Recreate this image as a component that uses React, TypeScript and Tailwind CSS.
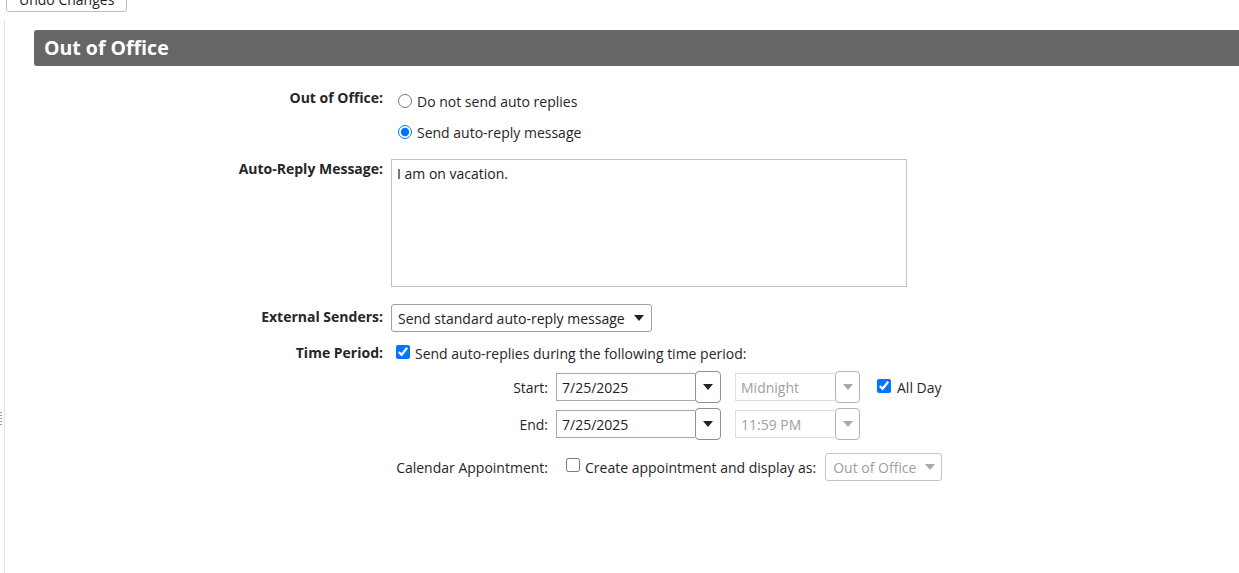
import React from 'react';

function Caret({ muted = false }: { muted?: boolean }) {
    return (
        <svg width="10" height="6" viewBox="0 0 10 6" className="block">
            <polygon points="0,0 10,0 5,6" fill={muted ? '#a8a8a8' : '#222'} />
        </svg>
    );
}

function DateField({ value }: { value: string }) {
    return (
        <div className="flex items-center">
            <div className="h-[28px] w-[139px] border border-[#a9a9a9] border-r-0 flex items-center pl-[5px] text-[#222]">
                {value}
            </div>
            <button className="h-[32px] w-[26px] border border-[#8f8f8f] rounded-[4px] bg-white flex items-center justify-center">
                <Caret />
            </button>
        </div>
    );
}

function TimeField({ value }: { value: string }) {
    return (
        <div className="flex items-center ml-[14px]">
            <div className="h-[28px] w-[100px] border border-[#dcdcdc] border-r-0 flex items-center pl-[5px] text-[#a0a0a0]">
                {value}
            </div>
            <button disabled className="h-[32px] w-[25px] border border-[#b5b5b5] rounded-[4px] bg-white flex items-center justify-center">
                <Caret muted />
            </button>
        </div>
    );
}

export default function App() {
    return (
        <div className="w-[1239px] h-[573px] overflow-hidden bg-white text-[14px] text-[#262626] font-['Open_Sans',sans-serif] relative">
            {/* top toolbar, mostly scrolled away */}
            <div className="pl-[6px] -mt-[14px] h-[26px]">
                <button className="h-[26px] px-[12px] border border-[#bdbdbd] rounded-[3px] bg-white text-[14px] text-[#222]">
                    Undo Changes
                </button>
            </div>

            {/* splitter grip */}
            <div className="absolute left-0 top-[412px] flex flex-col gap-[2px]">
                {[0, 1, 2, 3, 4].map((i) => (
                    <span key={i} className="block w-[2px] h-[1px] bg-[#9a9a9a]" />
                ))}
            </div>

            <div className="ml-[4px] mt-[8px] h-[600px] border-l border-[#e3e3e3] pl-[29px] pt-[10px]">
                <div className="h-[36px] w-[1300px] bg-[#666666] rounded-l-[3px] flex items-center pl-[10px] text-white font-bold text-[19.5px]">
                    Out of Office
                </div>

                {/* Out of Office */}
                <div className="flex mt-[24px]">
                    <div className="w-[349px] text-right font-bold leading-[16px]">Out of Office:</div>
                    <div className="ml-[8px] flex flex-col gap-[9px]">
                        <label className="flex items-center h-[22px]">
                            <input type="radio" name="ooo" className="m-0 ml-[7px] w-[14px] h-[14px] accent-[#0075ff]" />
                            <span className="ml-[5px]">Do not send auto replies</span>
                        </label>
                        <label className="flex items-center h-[22px]">
                            <input type="radio" name="ooo" defaultChecked className="m-0 ml-[7px] w-[14px] h-[14px] accent-[#0075ff]" />
                            <span className="ml-[5px]">Send auto-reply message</span>
                        </label>
                    </div>
                </div>

                {/* Auto-Reply Message */}
                <div className="flex mt-[16px]">
                    <div className="w-[349px] text-right font-bold leading-[20px]">Auto-Reply Message:</div>
                    <textarea
                        defaultValue="I am on vacation."
                        className="ml-[8px] w-[516px] h-[128px] border border-[#c2c2c2] px-[5px] pt-[4px] leading-[20px] resize-none outline-none text-[#222]"
                    />
                </div>

                {/* External Senders */}
                <div className="flex items-center h-[28px] mt-[17px]">
                    <div className="w-[349px] text-right font-bold leading-[20px] -mt-[3px]">External Senders:</div>
                    <div className="ml-[8px] h-[28px] w-[261px] border border-[#a0a0a0] rounded-[3px] flex items-center justify-between pl-[6px] pr-[7px] text-[#222]">
                        <span>Send standard auto-reply message</span>
                        <Caret />
                    </div>
                </div>

                {/* Time Period */}
                <div className="flex mt-[10px]">
                    <div className="w-[349px] text-right font-bold leading-[22px]">Time Period:</div>
                    <label className="ml-[8px] flex items-center h-[22px]">
                        <input type="checkbox" defaultChecked className="m-0 ml-[5px] -mt-[3px] w-[14px] h-[14px] accent-[#0075ff]" />
                        <span className="ml-[5px]">Send auto-replies during the following time period:</span>
                    </label>
                </div>

                <div className="ml-[357px]">
                    {/* Start */}
                    <div className="flex items-center h-[32px] mt-[7px]">
                        <div className="w-[157px] text-right mr-[8px]">Start:</div>
                        <DateField value="7/25/2025" />
                        <TimeField value="Midnight" />
                        <label className="flex items-center ml-[17px]">
                            <input type="checkbox" defaultChecked className="m-0 -mt-[2px] w-[14px] h-[14px] accent-[#0075ff]" />
                            <span className="ml-[6px]">All Day</span>
                        </label>
                    </div>

                    {/* End */}
                    <div className="flex items-center h-[32px] mt-[5px]">
                        <div className="w-[157px] text-right mr-[8px]">End:</div>
                        <DateField value="7/25/2025" />
                        <TimeField value="11:59 PM" />
                    </div>

                    {/* Calendar Appointment */}
                    <div className="flex items-center h-[28px] mt-[13px]">
                        <div className="w-[157px] text-right mr-[8px] whitespace-nowrap">Calendar Appointment:</div>
                        <label className="flex items-center ml-[10px]">
                            <input type="checkbox" className="m-0 -mt-[4px] w-[14px] h-[14px] accent-[#0075ff]" />
                            <span className="ml-[5px]">Create appointment and display as:</span>
                        </label>
                        <div className="ml-[9px] h-[28px] w-[117px] border border-[#c4c4c4] rounded-[3px] flex items-center justify-between pl-[7px] pr-[6px] text-[#a0a0a0]">
                            <span>Out of Office</span>
                            <Caret muted />
                        </div>
                    </div>
                </div>
            </div>
        </div>
    );
}
